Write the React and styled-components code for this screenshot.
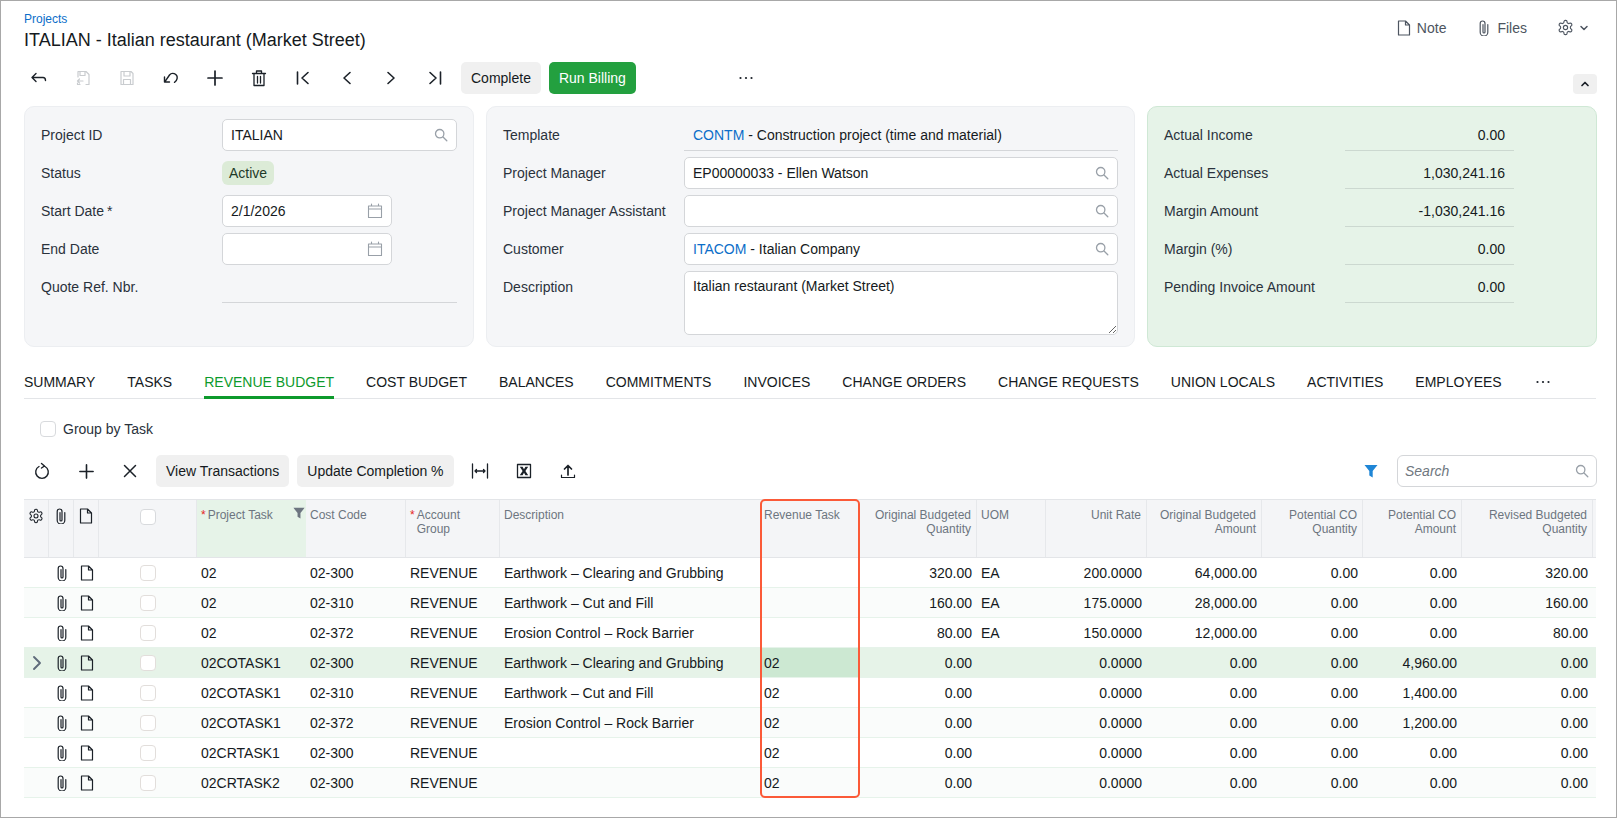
import React from "react";
import styled, { createGlobalStyle } from "styled-components";

const Global = createGlobalStyle`
  html, body { margin: 0; padding: 0; background: #fff; }
  body { font-family: "Liberation Sans", Arial, sans-serif; font-size: 14px; color: #151a21; }
  * { box-sizing: border-box; }
`;

const Page = styled.div`
  width: 1617px; height: 818px; border: 1px solid #a8a8a8; overflow: hidden; background: #fff;
`;
const Header = styled.header`
  display: flex; justify-content: space-between; align-items: flex-start; padding: 11px 20px 0 23px; height: 61px;
`;
const Crumb = styled.a`
  display: block; font-size: 12px; line-height: 14px; color: #0b6ec9;
`;
const Title = styled.h1`
  margin: 2px 0 0; font-size: 18px; line-height: 24px; font-weight: 400; color: #151a21;
`;
const HeaderActions = styled.div`
  display: flex; align-items: center; gap: 30px; padding-top: 7px; padding-right: 7px; font-size: 14px; color: #4d5560;
`;
const HeaderAction = styled.span`
  display: inline-flex; align-items: center; gap: 5px;
`;
const Toolbar = styled.div`
  display: flex; align-items: center; height: 32px; padding-left: 16px; padding-right: 19px;
`;
const IconSlot = styled.span`
  width: 44px; height: 32px; display: inline-flex; align-items: center; justify-content: center; flex: none;
  margin-left: ${p => p.$ml || 0}px;
  color: ${p => (p.$off ? "#c9cccf" : "#1b2128")};
`;
const Btn = styled.button`
  height: 32px; padding: 0 10px; margin-left: ${p => p.$ml || 0}px; border: 0; border-radius: 5px; font: inherit; font-size: 14px;
  background: ${p => (p.$primary ? "#23a03f" : "#f0f0f0")}; color: ${p => (p.$primary ? "#fff" : "#151a21")}; flex: none;
`;
const Collapse = styled.span`
  margin-left: auto; align-self: flex-end; width: 24px; height: 20px; border-radius: 4px; background: #f0f0f0;
  display: inline-flex; align-items: center; justify-content: center; color: #1b2128;
`;
const Panels = styled.div`
  display: grid; grid-template-columns: 450px 649px 450px; gap: 12px; margin: 12px 0 0 23px; height: 241px;
`;
const Panel = styled.section`
  border: 1px solid ${p => (p.$green ? "#cfe8d5" : "#eceef1")}; border-radius: 10px;
  background: ${p => (p.$green ? "#e6f3e8" : "#f5f6f8")};
  padding: 12px 16px 0; display: flex; flex-direction: column; gap: 6px;
`;
const Field = styled.div`
  display: flex; align-items: flex-start; min-height: 32px;
`;
const Label = styled.label`
  width: ${p => p.$w}px; flex: none; line-height: 32px; color: #2a323c;
`;
const Req = styled.span`
  margin-left: 3px;
`;
const InputBox = styled.div`
  display: flex; align-items: center; height: 32px; width: ${p => (p.$w ? p.$w + "px" : "100%")}; flex: ${p => (p.$w ? "none" : 1)};
  background: #fff; border: 1px solid #d4d6d9; border-radius: 5px; padding: 0 8px; color: #99a0a8;
`;
const Input = styled.input`
  flex: 1; min-width: 0; border: 0; outline: 0; padding: 0; background: transparent; font: inherit; color: #151a21;
  &::placeholder { font-style: italic; color: #6f7780; }
`;
const LinkText = styled.div`
  flex: 1; min-width: 0; color: #151a21; white-space: nowrap;
`;
const A = styled.span` color: #0b6ec9; `;
const Tag = styled.span`
  margin-top: 4px; height: 24px; line-height: 25px; padding: 0 7px; border-radius: 6px; background: #dcebd7; color: #1f3a28;
`;
const Plain = styled.div`
  flex: 1; height: 32px; line-height: 32px; border-bottom: 1px solid #d4d6d9; padding-left: ${p => p.$pl || 0}px; white-space: nowrap;
`;
const Area = styled.textarea`
  flex: 1; height: 64px; padding: 6px 8px; border: 1px solid #d4d6d9; border-radius: 5px; background: #fff; font: inherit; color: #151a21; outline: 0; display: block;
`;
const AmountLabel = styled.span`
  width: 181px; flex: none; line-height: 32px; color: #2a323c;
`;
const Amount = styled.div`
  width: 169px; flex: none; height: 32px; line-height: 32px; text-align: right; padding-right: 9px; border-bottom: 1px solid #ccd8d0;
`;
const Tabs = styled.nav`
  display: flex; gap: 32px; margin: 19px 20px 0 23px; height: 33px; border-bottom: 1px solid #e3e5e8;
`;
const Tab = styled.span`
  position: relative; line-height: 32px; height: 33px; white-space: nowrap; color: ${p => (p.$active ? "#0d9a2c" : "#151a21")};
  border-bottom: 3px solid ${p => (p.$active ? "#0d9a2c" : "transparent")};
`;
const TabDots = styled.span` display: inline-flex; align-items: center; height: 32px; color: #1b2128; `;
const GroupRow = styled.label`
  display: flex; align-items: center; gap: 7px; height: 16px; margin: 22px 0 0 39px; color: #2a323c;
`;
const Check = styled.span`
  display: block; width: 16px; height: 16px; background: #fff; border: 1px solid ${p => (p.$muted ? "#e2dedb" : "#d8dadd")}; border-radius: 4px; flex: none;
`;
const GridToolbar = styled(Toolbar)`
  margin-top: 18px; padding-left: 19px; padding-right: 19px;
`;
const Spacer = styled.span` flex: 1; `;
const Search = styled(InputBox)`
  width: 200px; flex: none; border-radius: 6px; padding: 0 7px;
`;
const GridWrap = styled.div`
  position: relative; margin: 12px 20px 0 23px;
`;
const cols = "25px 25px 25px 98px 109px 100px 94px 260px 99px 118px 69px 101px 115px 101px 99px 131px 3px";
const HeadRow = styled.div`
  display: grid; grid-template-columns: ${cols}; height: 59px; background: #f4f5f7;
  border-top: 1px solid #e3e5e8; border-bottom: 1px solid #e3e5e8;
`;
const HeadCell = styled.div`
  padding: 8px 5px 0 4px; font-size: 12px; line-height: 14px; color: #6d7580; position: relative;
  border-right: 1px solid ${p => (p.$none ? "transparent" : "#e6e8eb")};
  text-align: ${p => (p.$right ? "right" : "left")};
  background: ${p => (p.$active ? "#e6f3e8" : "transparent")};
  display: ${p => (p.$star ? "flex" : "block")};
`;
const IconCell = styled.div`
  display: flex; justify-content: center; align-items: flex-start; padding-top: ${p => p.$pt ?? 8}px;
  border-right: 1px solid ${p => (p.$line ? "#e6e8eb" : "transparent")}; color: #1b2128;
`;
const Star = styled.span` color: #e5251e; margin-right: 2px; `;
const HeadFilter = styled.span` position: absolute; right: 0; top: 7px; color: #6d7580; `;
const Row = styled.div`
  display: grid; grid-template-columns: ${cols}; height: 30px;
  border-bottom: 1px solid #e6f3ea;
  background: ${p => (p.$current ? "#e6f3e8" : p.$alt ? "#fafcfb" : "#fff")};
`;
const Cell = styled.div`
  padding: 0 5px 0 4px; line-height: 31px; white-space: nowrap; overflow: hidden;
  text-align: ${p => (p.$right ? "right" : "left")};
  background: ${p => (p.$hit ? "#cce8d2" : "transparent")};
`;
const BodyIcon = styled.div`
  display: flex; align-items: center; justify-content: center; color: ${p => p.$c || "#1b2128"};
`;
const Outline = styled.div`
  position: absolute; left: 736px; top: 0; width: 100px; height: 299px; border: 2px solid #fb5a38; border-radius: 5px; pointer-events: none;
`;
const Svg = styled.svg`
  display: block; flex: none; fill: none; stroke: currentColor; stroke-width: ${p => p.$sw || 1.4}; stroke-linecap: round; stroke-linejoin: round;
`;

const I = ({ s = 16, sw, children, vb = 16 }) => (
  <Svg width={s} height={s} viewBox={`0 0 ${vb} ${vb}`} $sw={sw}>{children}</Svg>
);
const Back = () => <I s={18} vb={18}><path d="M6 4.5 2 8.5l4 4M2.5 8.5H13c1.7 0 2.5 1.2 2.5 3" /></I>;
const SaveBack = () => <I s={18} vb={18} sw={1.2}><path d="M4 8V2.500h8l3 3V15.500h-3M6 2.500v4h5v-4M9 12H3.500M5.500 10l-2 2 2 2M3.500 14v1.500H6" /></I>;
const Save = () => <I s={18} vb={18} sw={1.2}><path d="M3 2.5h10l2 2v11H3zM6 2.5v4.5h6V2.5M5.5 15.5v-5h7v5" /></I>;
const Undo = () => <I s={18} vb={18}><path d="M2.500 8 2.500 13 7.500 13M2.800 12.800 7.500 6c1.200-1.500 3-2 4.800-1.300 2 .8 3.200 2.800 2.800 5-.3 1.600-1.200 2.800-2.600 3.600" /></I>;
const Plus = ({ s = 18 }) => <I s={s} vb={18} sw={1.7}><path d="M9 2v14M2 9h14" /></I>;
const Trash = () => <I s={18} vb={18} sw={1.3}><path d="M2.500 4.500h13M6.500 4.500V2h5v2.500M4 4.500V16.500h10V4.500M7.500 7.500v6.500M10.500 7.500v6.500" /></I>;
const First = () => <I s={18} vb={18} sw={1.6}><path d="M3.500 3v12M14 3.500 8 9l6 5.500" /></I>;
const Prev = () => <I s={18} vb={18} sw={1.6}><path d="M12 3.500 6 9l6 5.500" /></I>;
const Next = () => <I s={18} vb={18} sw={1.6}><path d="m6 3.500 6 5.500-6 5.500" /></I>;
const Last = () => <I s={18} vb={18} sw={1.6}><path d="M14.500 3v12M4 3.500 10 9l-6 5.500" /></I>;
const Dots = () => <I s={18} vb={18} sw={0}><g fill="currentColor" stroke="none"><circle cx="3.500" cy="9" r="1.100" /><circle cx="9" cy="9" r="1.100" /><circle cx="14.500" cy="9" r="1.100" /></g></I>;
const Mag = ({ s = 14 }) => <I s={s} vb={14} sw={1.300}><circle cx="5.700" cy="5.700" r="4.200" /><path d="m9 9 3.800 3.800" /></I>;
const Cal = () => <I s={16} vb={16} sw={1.100}><path d="M1.500 3h13v11.500h-13zM1.500 6h13M4.500 1v2M11.500 1v2" /></I>;
const Clip = ({ s = 16 }) => <I s={s} vb={16} sw={1.200}><path d="M11.800 4.500v7.700a3.800 3.800 0 0 1-7.600 0V3.400a2.400 2.400 0 0 1 4.800 0v8.600a1 1 0 0 1-2 0V4.500" /></I>;
const Note = ({ s = 16 }) => <I s={s} vb={16} sw={1.200}><path d="M2.500 1h7l4 4v10h-11zM9.500 1v4h4" /></I>;
const Gear = ({ s = 17 }) => (
  <I s={s} vb={24} sw={1.600}>
    <path d="M12.220 2h-.44a2 2 0 0 0-2 2v.18a2 2 0 0 1-1 1.730l-.43.250a2 2 0 0 1-2 0l-.15-.080a2 2 0 0 0-2.730.730l-.22.380a2 2 0 0 0 .730 2.730l.15.100a2 2 0 0 1 1 1.720v.510a2 2 0 0 1-1 1.740l-.15.090a2 2 0 0 0-.730 2.730l.22.380a2 2 0 0 0 2.730.730l.15-.080a2 2 0 0 1 2 0l.43.250a2 2 0 0 1 1 1.730V20a2 2 0 0 0 2 2h.44a2 2 0 0 0 2-2v-.18a2 2 0 0 1 1-1.730l.43-.250a2 2 0 0 1 2 0l.15.080a2 2 0 0 0 2.730-.730l.22-.390a2 2 0 0 0-.730-2.730l-.15-.080a2 2 0 0 1-1-1.740v-.500a2 2 0 0 1 1-1.740l.15-.090a2 2 0 0 0 .730-2.730l-.22-.380a2 2 0 0 0-2.730-.730l-.15.080a2 2 0 0 1-2 0l-.43-.250a2 2 0 0 1-1-1.730V4a2 2 0 0 0-2-2z" />
    <circle cx="12" cy="12" r="3" />
  </I>
);
const ChevDown = () => <I s={10} vb={10} sw={1.500}><path d="m2 3.500 3 3 3-3" /></I>;
const ChevUp = () => <I s={10} vb={10} sw={1.700}><path d="m2 6.500 3-3 3 3" /></I>;
const Refresh = () => <I s={18} vb={18} sw={1.400}><path d="M6 4.500A6.300 6.300 0 1 0 12 4.500M8.500 1.500 11.500 4l-3 2" /></I>;
const Cross = () => <I s={18} vb={18} sw={1.500}><path d="m3.500 3.500 11 11M14.500 3.500l-11 11" /></I>;
const Fit = () => (
  <I s={18} vb={18} sw={1.300}><path d="M1.500 2v14M16.500 2v14M4 9h10M5.500 7.500 4 9l1.500 1.500M12.500 7.500 14 9l-1.500 1.500" /></I>
);
const Excel = () => (
  <I s={16} vb={16} sw={1.300}>
    <path d="M1.500 1.500h13v13h-13z" />
    <path d="M3.800 3.800h2.800L8 6.300l1.400-2.500h2.800L9.400 8l2.800 4.200H9.400L8 9.700l-1.400 2.500H3.800L6.600 8z" fill="currentColor" stroke="none" />
  </I>
);
const Upload = () => <I s={18} vb={18} sw={1.700}><path d="M9 13V3.500M5.500 7 9 3.500 12.500 7" /><path d="M2.500 13v2.500h13V13" strokeWidth="1.200" /></I>;
const Funnel = ({ s = 14 }) => (
  <I s={s} vb={14} sw={0}><path d="M.5 1h13L8.700 7v6.500L5.300 11.500V7z" fill="currentColor" stroke="none" /></I>
);
const ChevRight = () => <I s={16} vb={16} sw={1.900}><path d="m5 2 6 6-6 6" /></I>;

const FilterBlue = styled.span` color: #1f86d6; display: inline-flex; `;
const rows = [
  ["02", "02-300", "Earthwork – Clearing and Grubbing", "", "320.00", "EA", "200.0000", "64,000.00", "0.00", "0.00", "320.00"],
  ["02", "02-310", "Earthwork – Cut and Fill", "", "160.00", "EA", "175.0000", "28,000.00", "0.00", "0.00", "160.00"],
  ["02", "02-372", "Erosion Control – Rock Barrier", "", "80.00", "EA", "150.0000", "12,000.00", "0.00", "0.00", "80.00"],
  ["02COTASK1", "02-300", "Earthwork – Clearing and Grubbing", "02", "0.00", "", "0.0000", "0.00", "0.00", "4,960.00", "0.00"],
  ["02COTASK1", "02-310", "Earthwork – Cut and Fill", "02", "0.00", "", "0.0000", "0.00", "0.00", "1,400.00", "0.00"],
  ["02COTASK1", "02-372", "Erosion Control – Rock Barrier", "02", "0.00", "", "0.0000", "0.00", "0.00", "1,200.00", "0.00"],
  ["02CRTASK1", "02-300", "", "02", "0.00", "", "0.0000", "0.00", "0.00", "0.00", "0.00"],
  ["02CRTASK2", "02-300", "", "02", "0.00", "", "0.0000", "0.00", "0.00", "0.00", "0.00"],
];
const tabs = ["SUMMARY", "TASKS", "REVENUE BUDGET", "COST BUDGET", "BALANCES", "COMMITMENTS", "INVOICES", "CHANGE ORDERS", "CHANGE REQUESTS", "UNION LOCALS", "ACTIVITIES", "EMPLOYEES"];
const amounts = [["Actual Income", "0.00"], ["Actual Expenses", "1,030,241.16"], ["Margin Amount", "-1,030,241.16"], ["Margin (%)", "0.00"], ["Pending Invoice Amount", "0.00"]];

export default function App() {
  return (
    <Page>
      <Global />
      <Header>
        <div>
          <Crumb>Projects</Crumb>
          <Title>ITALIAN - Italian restaurant (Market Street)</Title>
        </div>
        <HeaderActions>
          <HeaderAction><Note /> Note</HeaderAction>
          <HeaderAction><Clip /> Files</HeaderAction>
          <HeaderAction><Gear /> <ChevDown /></HeaderAction>
        </HeaderActions>
      </Header>
      <Toolbar>
        <IconSlot><Back /></IconSlot>
        <IconSlot $off><SaveBack /></IconSlot>
        <IconSlot $off><Save /></IconSlot>
        <IconSlot><Undo /></IconSlot>
        <IconSlot><Plus /></IconSlot>
        <IconSlot><Trash /></IconSlot>
        <IconSlot><First /></IconSlot>
        <IconSlot><Prev /></IconSlot>
        <IconSlot><Next /></IconSlot>
        <IconSlot><Last /></IconSlot>
        <Btn $ml={4}>Complete</Btn>
        <Btn $primary $ml={8}>Run Billing</Btn>
        <IconSlot $ml={88}><Dots /></IconSlot>
        <Collapse><ChevUp /></Collapse>
      </Toolbar>
      <Panels>
        <Panel>
          <Field><Label $w={181}>Project ID</Label><InputBox><Input readOnly value="ITALIAN" /><Mag /></InputBox></Field>
          <Field><Label $w={181}>Status</Label><Tag>Active</Tag></Field>
          <Field><Label $w={181}>Start Date<Req>*</Req></Label><InputBox $w={170}><Input readOnly value="2/1/2026" /><Cal /></InputBox></Field>
          <Field><Label $w={181}>End Date</Label><InputBox $w={170}><Input readOnly value="" /><Cal /></InputBox></Field>
          <Field><Label $w={181}>Quote Ref. Nbr.</Label><Plain /></Field>
        </Panel>
        <Panel>
          <Field><Label $w={181}>Template</Label><Plain $pl={9}><A>CONTM</A> - Construction project (time and material)</Plain></Field>
          <Field><Label $w={181}>Project Manager</Label><InputBox><LinkText>EP00000033 - Ellen Watson</LinkText><Mag /></InputBox></Field>
          <Field><Label $w={181}>Project Manager Assistant</Label><InputBox><LinkText /><Mag /></InputBox></Field>
          <Field><Label $w={181}>Customer</Label><InputBox><LinkText><A>ITACOM</A> - Italian Company</LinkText><Mag /></InputBox></Field>
          <Field><Label $w={181}>Description</Label><Area readOnly defaultValue="Italian restaurant (Market Street)" /></Field>
        </Panel>
        <Panel $green>
          {amounts.map(([l, v]) => (
            <Field key={l}><AmountLabel>{l}</AmountLabel><Amount>{v}</Amount></Field>
          ))}
        </Panel>
      </Panels>
      <Tabs>
        {tabs.map(t => <Tab key={t} $active={t === "REVENUE BUDGET"}>{t}</Tab>)}
        <TabDots><Dots /></TabDots>
      </Tabs>
      <GroupRow><Check />Group by Task</GroupRow>
      <GridToolbar>
        <IconSlot><Refresh /></IconSlot>
        <IconSlot><Plus s={17} /></IconSlot>
        <IconSlot><Cross /></IconSlot>
        <Btn $ml={4}>View Transactions</Btn>
        <Btn $ml={8}>Update Completion %</Btn>
        <IconSlot $ml={4}><Fit /></IconSlot>
        <IconSlot><Excel /></IconSlot>
        <IconSlot><Upload /></IconSlot>
        <Spacer />
        <IconSlot><FilterBlue><Funnel /></FilterBlue></IconSlot>
        <IconSlot $ml={-40} as="span" hidden />
        <Search><Input readOnly placeholder="Search" /><Mag /></Search>
      </GridToolbar>
      <GridWrap>
        <HeadRow>
          <IconCell $line><Gear s={16} /></IconCell>
          <IconCell $line><Clip /></IconCell>
          <IconCell $line><Note /></IconCell>
          <IconCell $line $pt={9}><Check /></IconCell>
          <HeadCell $active $star $none><Star>*</Star>Project Task<HeadFilter><Funnel s={12} /></HeadFilter></HeadCell>
          <HeadCell>Cost Code</HeadCell>
          <HeadCell $star><Star>*</Star><span>Account<br />Group</span></HeadCell>
          <HeadCell $none>Description</HeadCell>
          <HeadCell $none>Revenue Task</HeadCell>
          <HeadCell $right>Original Budgeted Quantity</HeadCell>
          <HeadCell>UOM</HeadCell>
          <HeadCell $right>Unit Rate</HeadCell>
          <HeadCell $right>Original Budgeted Amount</HeadCell>
          <HeadCell $right>Potential CO Quantity</HeadCell>
          <HeadCell $right>Potential CO Amount</HeadCell>
          <HeadCell $right>Revised Budgeted Quantity</HeadCell>
          <HeadCell $none />
        </HeadRow>
        {rows.map((r, i) => (
          <Row key={i} $current={i === 3} $alt={i % 2 === 1}>
            <BodyIcon $c="#5f6b7a">{i === 3 && <ChevRight />}</BodyIcon>
            <BodyIcon><Clip /></BodyIcon>
            <BodyIcon><Note /></BodyIcon>
            <BodyIcon><Check $muted /></BodyIcon>
            <Cell>{r[0]}</Cell>
            <Cell>{r[1]}</Cell>
            <Cell>REVENUE</Cell>
            <Cell>{r[2]}</Cell>
            <Cell $hit={i === 3}>{r[3]}</Cell>
            <Cell $right>{r[4]}</Cell>
            <Cell>{r[5]}</Cell>
            <Cell $right>{r[6]}</Cell>
            <Cell $right>{r[7]}</Cell>
            <Cell $right>{r[8]}</Cell>
            <Cell $right>{r[9]}</Cell>
            <Cell $right>{r[10]}</Cell>
            <Cell />
          </Row>
        ))}
        <Outline />
      </GridWrap>
    </Page>
  );
}
